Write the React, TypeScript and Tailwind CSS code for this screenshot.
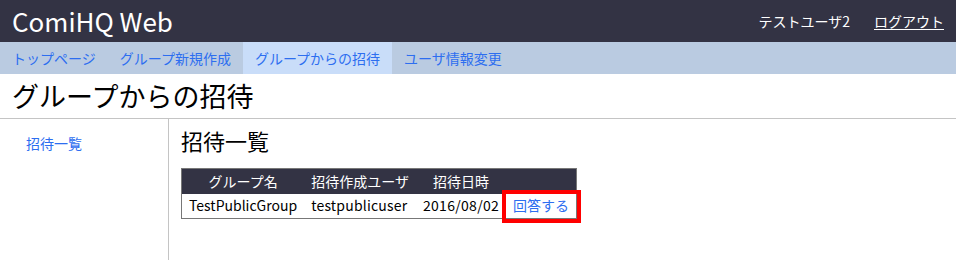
const font = { fontFamily: '"Noto Sans CJK JP", "Noto Sans", sans-serif' };

const navItems = [
  { label: "トップページ", active: false },
  { label: "グループ新規作成", active: false },
  { label: "グループからの招待", active: true },
  { label: "ユーザ情報変更", active: false },
];

export default function App() {
  return (
    <div className="h-[260px] w-[956px] bg-white text-black" style={font}>
      <header className="flex h-[42px] items-center justify-between bg-[#333344] pl-3 pr-3 text-white">
        <h1 className="text-[26px] leading-none">ComiHQ Web</h1>
        <div className="flex items-center gap-6 text-[14px]">
          <span>テストユーザ2</span>
          <a href="#" className="underline underline-offset-2">
            ログアウト
          </a>
        </div>
      </header>

      <nav className="flex h-8 items-stretch bg-[#bacbe1] text-[14px] text-[#2d6ef0]">
        {navItems.map((item) => (
          <a
            key={item.label}
            href="#"
            className={
              item.active
                ? "flex items-center bg-[#c9ddf9] px-3"
                : "flex items-center px-3"
            }
          >
            {item.label}
          </a>
        ))}
      </nav>

      <h2 className="h-[45px] border-b border-[#c4c4c4] pl-3 pt-[4px] text-[27px] leading-[36px]">
        グループからの招待
      </h2>

      <div className="flex h-[141px]">
        <aside className="w-[169px] shrink-0 border-r border-[#c4c4c4] pl-[26px] pt-[14px] text-[14px]">
          <a href="#" className="text-[#2d6ef0]">
            招待一覧
          </a>
        </aside>

        <main className="pl-3 pt-[6px]">
          <h3 className="text-[22px] leading-[30px]">招待一覧</h3>
          <table className="mt-[13px] border border-[#777777] text-[14px]">
            <thead>
              <tr className="bg-[#333344] text-white">
                <th className="h-[25px] px-[7px] font-normal">グループ名</th>
                <th className="px-[7px] font-normal">招待作成ユーザ</th>
                <th className="px-[7px] font-normal">招待日時</th>
                <th className="px-[7px]"></th>
              </tr>
            </thead>
            <tbody>
              <tr>
                <td className="h-[25px] px-[7px]">TestPublicGroup</td>
                <td className="px-[7px] tracking-[0.2px]">testpublicuser</td>
                <td className="px-[7px] tracking-[0.3px]">2016/08/02</td>
                <td className="px-[7px] outline-4 outline-[#ff0000]">
                  <a href="#" className="text-[#2d6ef0]">
                    回答する
                  </a>
                </td>
              </tr>
            </tbody>
          </table>
        </main>
      </div>
    </div>
  );
}
